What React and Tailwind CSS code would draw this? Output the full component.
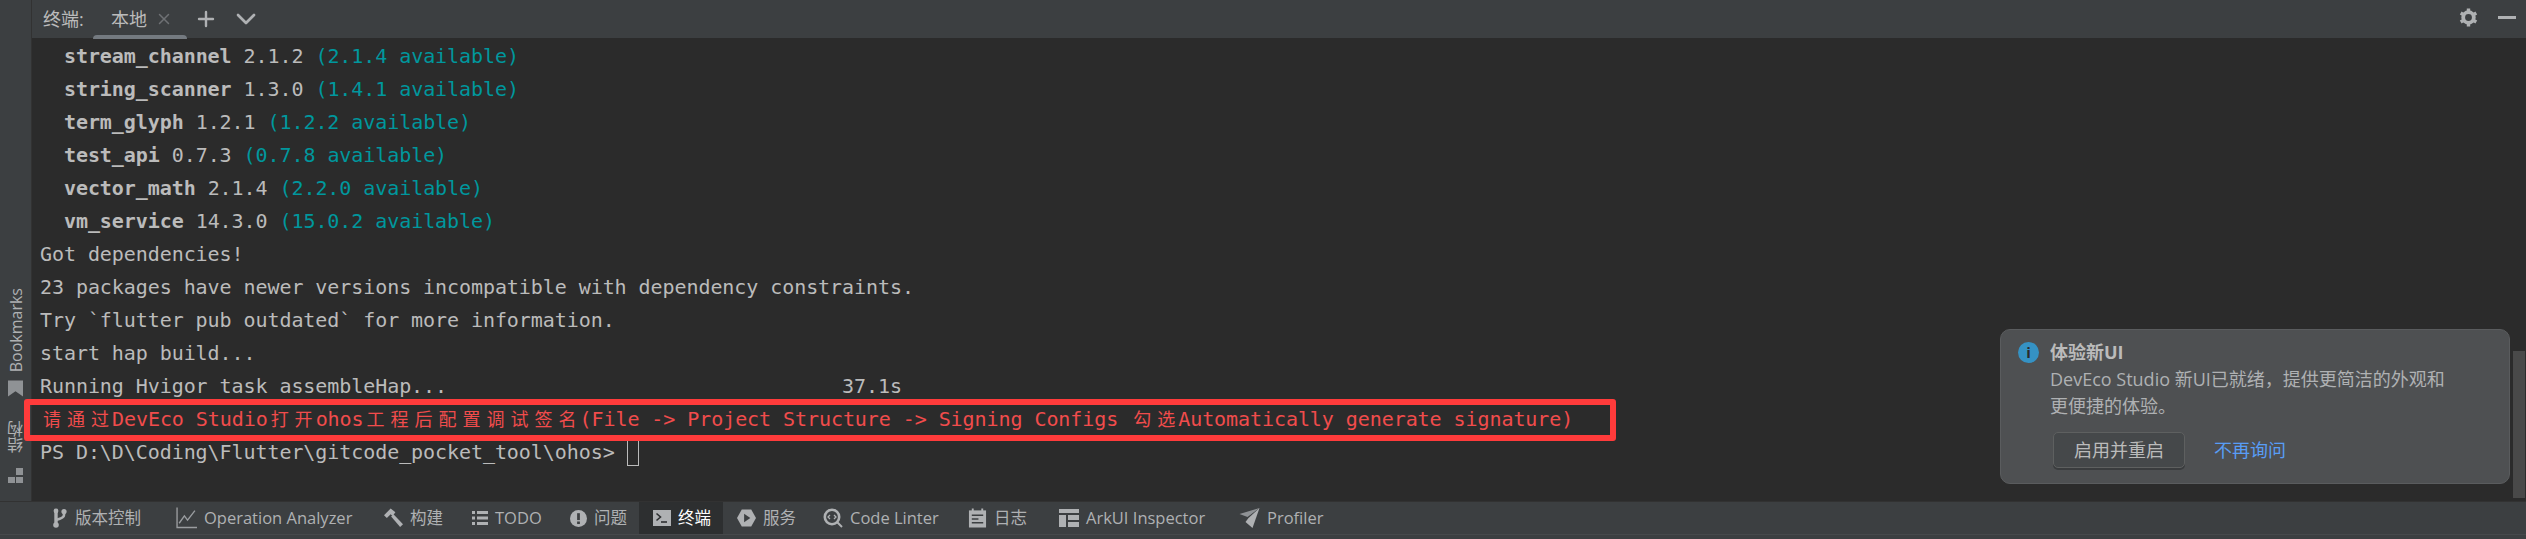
import { Plus, ChevronDown, X } from "lucide-react";

const mono = "font-['DejaVu_Sans_Mono','Noto_Sans_CJK_SC',monospace]";
const ui = "font-['Open_Sans','Noto_Sans_CJK_SC',sans-serif]";
const cjkCell = "-mr-[3px] pl-[3px] text-[18px] leading-none tracking-[6px]";

const packages = [
  ["stream_channel", "2.1.2", "2.1.4"],
  ["string_scanner", "1.3.0", "1.4.1"],
  ["term_glyph", "1.2.1", "1.2.2"],
  ["test_api", "0.7.3", "0.7.8"],
  ["vector_math", "2.1.4", "2.2.0"],
  ["vm_service", "14.3.0", "15.0.2"],
];

const plainLines = [
  "Got dependencies!",
  "23 packages have newer versions incompatible with dependency constraints.",
  "Try `flutter pub outdated` for more information.",
  "start hap build...",
];

function GearIcon({ className }) {
  return (
    <svg viewBox="0 0 20 20" className={className} fill="none" stroke="#afb1b3">
      <circle cx="10" cy="10" r="5.6" strokeWidth="4" />
      <path d="M10 0.5 V4 M10 16 V19.5 M1.8 5.2 L4.8 7 M15.2 13 L18.2 14.8 M1.8 14.8 L4.8 13 M15.2 7 L18.2 5.2" strokeWidth="3.6" />
    </svg>
  );
}

function BookmarkIcon({ className }) {
  return (
    <svg viewBox="0 0 16 17" className={className} fill="#8f9295">
      <path d="M0 0 H16 V17 L8 11.5 L0 17 Z" />
    </svg>
  );
}

function BranchIcon({ className }) {
  return (
    <svg viewBox="0 0 16 20" className={className} fill="none" stroke="#afb1b3">
      <path d="M4 3 V17" strokeWidth="3.4" />
      <path d="M12 4 V7 Q12 10 4 12" strokeWidth="2.6" />
      <circle cx="4" cy="17" r="2.8" fill="#afb1b3" strokeWidth="0" />
      <circle cx="12" cy="3.5" r="2.6" fill="#afb1b3" strokeWidth="0" />
      <circle cx="4" cy="3" r="2.4" fill="#afb1b3" strokeWidth="0" />
    </svg>
  );
}

function ChartIcon({ className }) {
  return (
    <svg viewBox="0 0 20 20" className={className} fill="none" stroke="#9a9da0" strokeWidth="1.3">
      <path d="M1 0 V19 H20" />
      <path d="M3 15 L8 8 L11 12 L18 3" />
    </svg>
  );
}

function HammerIcon({ className }) {
  return (
    <svg viewBox="0 0 20 20" className={className} fill="#afb1b3">
      <path d="M0 7 L7 0 L12 4 L9 8 L7 6 L3 10 Z" />
      <path d="M7.5 8.5 L10 6 L20 16.5 L17 19.5 Z" />
    </svg>
  );
}

function ListIcon({ className }) {
  return (
    <svg viewBox="0 0 16 16" className={className} fill="#afb1b3">
      <rect x="0" y="1" width="3" height="3" />
      <rect x="5" y="1" width="11" height="3" />
      <rect x="0" y="6.5" width="3" height="3" />
      <rect x="5" y="6.5" width="11" height="3" />
      <rect x="0" y="12" width="3" height="3" />
      <rect x="5" y="12" width="11" height="3" />
    </svg>
  );
}

function AlertIcon({ className }) {
  return (
    <svg viewBox="0 0 16 16" className={className}>
      <circle cx="8" cy="8" r="8" fill="#afb1b3" />
      <rect x="6.7" y="3" width="2.6" height="6.5" fill="#3c3f41" />
      <rect x="6.7" y="10.8" width="2.6" height="2.4" fill="#3c3f41" />
    </svg>
  );
}

function TerminalIcon({ className }) {
  return (
    <svg viewBox="0 0 18 18" className={className}>
      <rect x="0" y="1" width="18" height="16" fill="#afb1b3" />
      <path d="M3.5 4.5 L7.5 8 L3.5 11.5" fill="none" stroke="#2d2f30" strokeWidth="1.6" />
      <path d="M8 13 H14" stroke="#2d2f30" strokeWidth="1.6" />
    </svg>
  );
}

function ServiceIcon({ className }) {
  return (
    <svg viewBox="0 0 20 20" className={className}>
      <path d="M5 1 H15 L20 10 L15 19 H5 L0 10 Z" fill="#afb1b3" />
      <path d="M7.5 5.5 L14 10 L7.5 14.5 Z" fill="#3c3f41" />
    </svg>
  );
}

function LinterIcon({ className }) {
  return (
    <svg viewBox="0 0 20 20" className={className} fill="none" stroke="#afb1b3">
      <circle cx="9" cy="9" r="7.2" strokeWidth="2.6" />
      <path d="M14 14 L19 19" strokeWidth="2" />
      <path d="M7 7 L5 9 L7 11 M11 7 L13 9 L11 11" strokeWidth="1.3" />
    </svg>
  );
}

function LogIcon({ className }) {
  return (
    <svg viewBox="0 0 20 20" className={className}>
      <rect x="1" y="2" width="18" height="18" fill="#afb1b3" />
      <path d="M5 0 V3 M15 0 V3" stroke="#afb1b3" strokeWidth="2" />
      <path d="M4 7 H16 M4 11 H11 M4 15 H16" stroke="#3c3f41" strokeWidth="1.6" />
    </svg>
  );
}

function LayoutIcon({ className }) {
  return (
    <svg viewBox="0 0 20 18" className={className} fill="#afb1b3">
      <rect x="0" y="0" width="20" height="4" />
      <rect x="0" y="6" width="7" height="12" />
      <rect x="9" y="6" width="11" height="5" />
      <rect x="9" y="13" width="11" height="5" />
    </svg>
  );
}

function ProfilerIcon({ className }) {
  return (
    <svg viewBox="0 0 20 20" className={className}>
      <path d="M20 0 L0 6 L8 9 Z" fill="#8f9295" />
      <path d="M20 0 L9 10 L6 14 L13 20 Z" fill="#afb1b3" />
    </svg>
  );
}

function StructureIcon({ className }) {
  return (
    <svg viewBox="0 0 16 16" className={className} fill="#8f9295">
      <rect x="8" y="0" width="7" height="7" />
      <rect x="0" y="9" width="7" height="6" />
      <rect x="8" y="9" width="7" height="6" />
    </svg>
  );
}

function ToolTab({ icon, label, active, className = "" }) {
  return (
    <div className={`flex h-full shrink-0 items-center gap-[7px] pl-[14px] ${active ? "bg-[#2d2f30] text-white" : "text-[#afb1b3]"} ${className}`}>
      {icon}
      <span>{label}</span>
    </div>
  );
}

export default function App() {
  return (
    <div className={`flex h-[539px] w-[2526px] flex-col overflow-hidden bg-[#2b2b2b] ${ui}`}>
      <div className="flex min-h-0 flex-1">
        {/* left stripe */}
        <div className="flex w-[32px] shrink-0 flex-col items-center justify-end border-r border-[#323232] bg-[#3c3f41] pb-[17px] text-[16px] leading-[20px] text-[#afb1b3]">
          <span className="rotate-180 [writing-mode:vertical-rl]">Bookmarks</span>
          <BookmarkIcon className="mt-[8px] h-[17px] w-[15px]" />
          <span className="mt-[24px] rotate-180 [writing-mode:vertical-rl]">结构</span>
          <StructureIcon className="mt-[15px] h-[16px] w-[16px]" />
        </div>

        <div className="flex min-w-0 flex-1 flex-col">
          {/* tab header */}
          <div className="flex h-[38px] shrink-0 items-center bg-[#3c3f41] text-[18px] text-[#bbbbbb]">
            <span className="ml-[11px] w-[50px]">终端:</span>
            <div className="relative flex h-full items-center pl-[18px] pr-[14px]">
              <span>本地</span>
              <X className="ml-[8px] h-[18px] w-[18px] text-[#6e7174]" />
              <div className="absolute -bottom-px left-0 right-0 h-[4px] rounded-t-sm bg-[#747a80]" />
            </div>
            <Plus className="ml-[7px] h-[24px] w-[24px] text-[#afb1b3]" strokeWidth={2.4} />
            <ChevronDown className="ml-[12px] h-[32px] w-[32px] text-[#afb1b3]" strokeWidth={2} />
            <GearIcon className="mb-[3px] ml-auto h-[19px] w-[19px]" />
            <div className="mb-[3px] ml-[20px] mr-[10px] h-[3px] w-[18px] bg-[#afb1b3]" />
          </div>

          {/* terminal */}
          <div className={`relative min-h-0 flex-1 whitespace-pre pl-[8px] pt-[2px] text-[20px] leading-[33px] tracking-[-0.07px] text-[#bbbbbb] ${mono}`}>
            {packages.map(([name, current, next]) => (
              <div key={name}>
                {"  "}
                <span className="font-bold">{name}</span> {current} <span className="text-[#00979d]">({next} available)</span>
              </div>
            ))}
            {plainLines.map((line) => (
              <div key={line}>{line}</div>
            ))}
            <div>
              Running Hvigor task assembleHap...{"                                 "}37.1s
            </div>
            <div className="text-[#f14c4c]">
              <span className={cjkCell}>请通过</span>DevEco Studio
              <span className={cjkCell}>打开</span>ohos
              <span className={cjkCell}>工程后配置调试签名</span>(File -&gt; Project Structure -&gt; Signing Configs <span className={cjkCell}>勾选</span>Automatically generate signature)
            </div>
            <div className="flex items-center">
              PS D:\D\Coding\Flutter\gitcode_pocket_tool\ohos&gt;{" "}
              <span className="h-[27px] w-[12px] border border-[#bbbbbb]" />
            </div>

            {/* annotation drawn over the screenshot */}
            <div className="absolute left-[-8px] top-[361px] h-[42px] w-[1592px] rounded-[3px] border-[6px] border-[#ff3b3b]" />

            {/* notification */}
            <div className={`absolute right-[16px] top-[291px] h-[155px] w-[510px] rounded-[10px] border border-[#5a5c5e] bg-[#4e5052] pl-[49px] pt-[9px] tracking-normal text-[#bbbbbb] ${ui}`}>
              <div className="absolute left-[17px] top-[12px] flex h-[21px] w-[21px] items-center justify-center rounded-full bg-[#3592c4] text-[15px] font-bold leading-none text-[#2b2b2b]">
                i
              </div>
              <div className="text-[18px] font-bold leading-[27px]">体验新UI</div>
              <div className="text-[18px] leading-[27px] text-[#afb1b3]">
                DevEco Studio 新UI已就绪，提供更简洁的外观和
                <br />
                更便捷的体验。
              </div>
              <div className="mt-[12px] flex items-center text-[18px] leading-[27px]">
                <div className="ml-[3px] flex h-[36px] w-[132px] items-center justify-center rounded-[5px] border border-[#5e6060] bg-[#45484a] shadow-[0_2px_0_#3a3c3e]">
                  启用并重启
                </div>
                <span className="ml-[29px] text-[#589df6]">不再询问</span>
              </div>
            </div>

            {/* scrollbar */}
            <div className="absolute right-px top-[313px] h-[147px] w-[12px] bg-[#494949]" />
          </div>
        </div>
      </div>

      {/* bottom tool window bar */}
      <div className="h-[38px] shrink-0 border-t border-[#323232] bg-[#3c3f41] text-[16.5px]">
        <div className="flex h-[33px] items-center border-b border-[#46494b] pl-[38px]">
          <ToolTab icon={<BranchIcon className="h-[20px] w-[16px]" />} label="版本控制" className="w-[124px]" />
          <ToolTab icon={<ChartIcon className="h-[22px] w-[21px]" />} label="Operation Analyzer" className="w-[208px]" />
          <ToolTab icon={<HammerIcon className="h-[20px] w-[19px]" />} label="构建" className="w-[88px]" />
          <ToolTab icon={<ListIcon className="h-[16px] w-[16px]" />} label="TODO" className="w-[98px]" />
          <ToolTab icon={<AlertIcon className="h-[17px] w-[17px]" />} label="问题" className="w-[83px]" />
          <ToolTab icon={<TerminalIcon className="h-[18px] w-[18px]" />} label="终端" active className="w-[84px]" />
          <ToolTab icon={<ServiceIcon className="h-[20px] w-[19px]" />} label="服务" className="w-[86px]" />
          <ToolTab icon={<LinterIcon className="h-[20px] w-[20px]" />} label="Code Linter" className="w-[145px]" />
          <ToolTab icon={<LogIcon className="h-[20px] w-[19px]" />} label="日志" className="w-[91px]" />
          <ToolTab icon={<LayoutIcon className="h-[18px] w-[20px]" />} label="ArkUI Inspector" className="w-[180px]" />
          <ToolTab icon={<ProfilerIcon className="h-[20px] w-[21px]" />} label="Profiler" className="w-[110px]" />
        </div>
      </div>
    </div>
  );
}
